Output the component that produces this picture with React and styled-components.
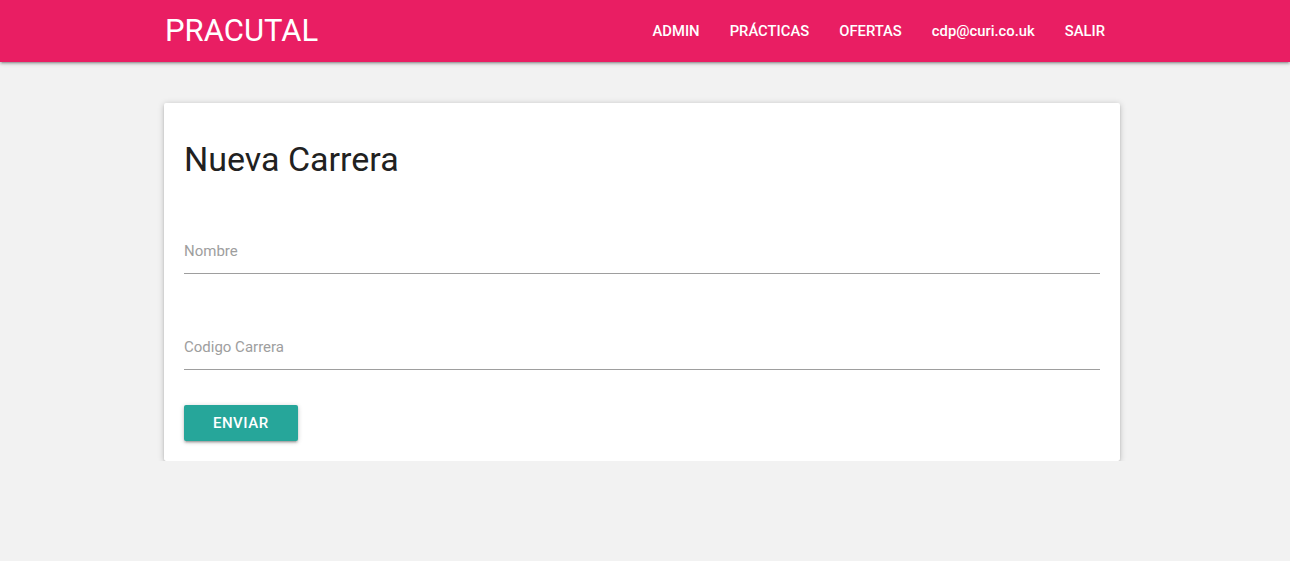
import React from "react";
import styled, { createGlobalStyle } from "styled-components";

const GlobalStyle = createGlobalStyle`
  * {
    box-sizing: border-box;
  }
  body {
    margin: 0;
    background: #f2f2f2;
    font-family: Roboto, "Noto Sans", sans-serif;
    color: #212121;
  }
`;

const App = () => {
  return (
    <>
      <GlobalStyle />
      <Nav>
        <NavWrapper>
          <Brand>PRACUTAL</Brand>
          <NavLinks>
            <li>ADMIN</li>
            <li>PRÁCTICAS</li>
            <li>OFERTAS</li>
            <li>cdp@curi.co.uk</li>
            <li>SALIR</li>
          </NavLinks>
        </NavWrapper>
      </Nav>
      <Main>
        <Card>
          <Title>Nueva Carrera</Title>
          <Field first>
            <Label>Nombre</Label>
          </Field>
          <Field>
            <Label>Codigo Carrera</Label>
          </Field>
          <Button>ENVIAR</Button>
        </Card>
      </Main>
    </>
  );
};

const shadow = `0 2px 2px 0 rgba(0, 0, 0, 0.14), 0 3px 1px -2px rgba(0, 0, 0, 0.12),
    0 1px 5px 0 rgba(0, 0, 0, 0.2)`;

const Nav = styled.nav`
  width: 100%;
  height: 62px;
  background: #e91e63;
  color: #fff;
  box-shadow: ${shadow};
`;

const NavWrapper = styled.div`
  width: 956px;
  height: 100%;
  margin-left: 164px;
  display: flex;
  align-items: center;
  justify-content: space-between;
`;

const Brand = styled.a`
  font-size: 31px;
  line-height: 62px;
  margin-top: -1px;
  padding-left: 1px;
  color: #fff;
`;

const NavLinks = styled.ul`
  list-style: none;
  margin: 0;
  padding: 0;
  display: flex;
  li {
    padding: 0 15px;
    font-size: 14.8px;
    font-weight: 500;
    line-height: 62px;
  }
`;

const Main = styled.main`
  width: 956px;
  margin-left: 164px;
  padding-top: 41px;
`;

const Card = styled.section`
  background: #fff;
  border-radius: 2px;
  padding: 20px;
  box-shadow: 0 2px 2px 0 rgba(0, 0, 0, 0.14), 0 3px 1px -2px rgba(0, 0, 0, 0.12),
    0 1px 6px 0 rgba(0, 0, 0, 0.22);
`;

const Title = styled.h4`
  margin: 16px 0 0;
  padding-bottom: 1px;
  font-size: 34px;
  font-weight: 400;
  line-height: 40px;
  color: #212121;
`;

const Field = styled.div`
  height: 49px;
  margin-top: ${(p) => (p.first ? "45px" : "47px")};
  border-bottom: 1px solid #9e9e9e;
  padding-top: 16px;
`;

const Label = styled.label`
  display: block;
  font-size: 15px;
  line-height: 20px;
  color: #9e9e9e;
`;

const Button = styled.button`
  margin-top: 35px;
  height: 36px;
  padding: 0 29px;
  border: none;
  border-radius: 2px;
  background: #26a69a;
  color: #fff;
  font-family: Roboto, sans-serif;
  font-size: 15px;
  font-weight: 500;
  letter-spacing: 0.5px;
  box-shadow: ${shadow};
`;

export default App;
